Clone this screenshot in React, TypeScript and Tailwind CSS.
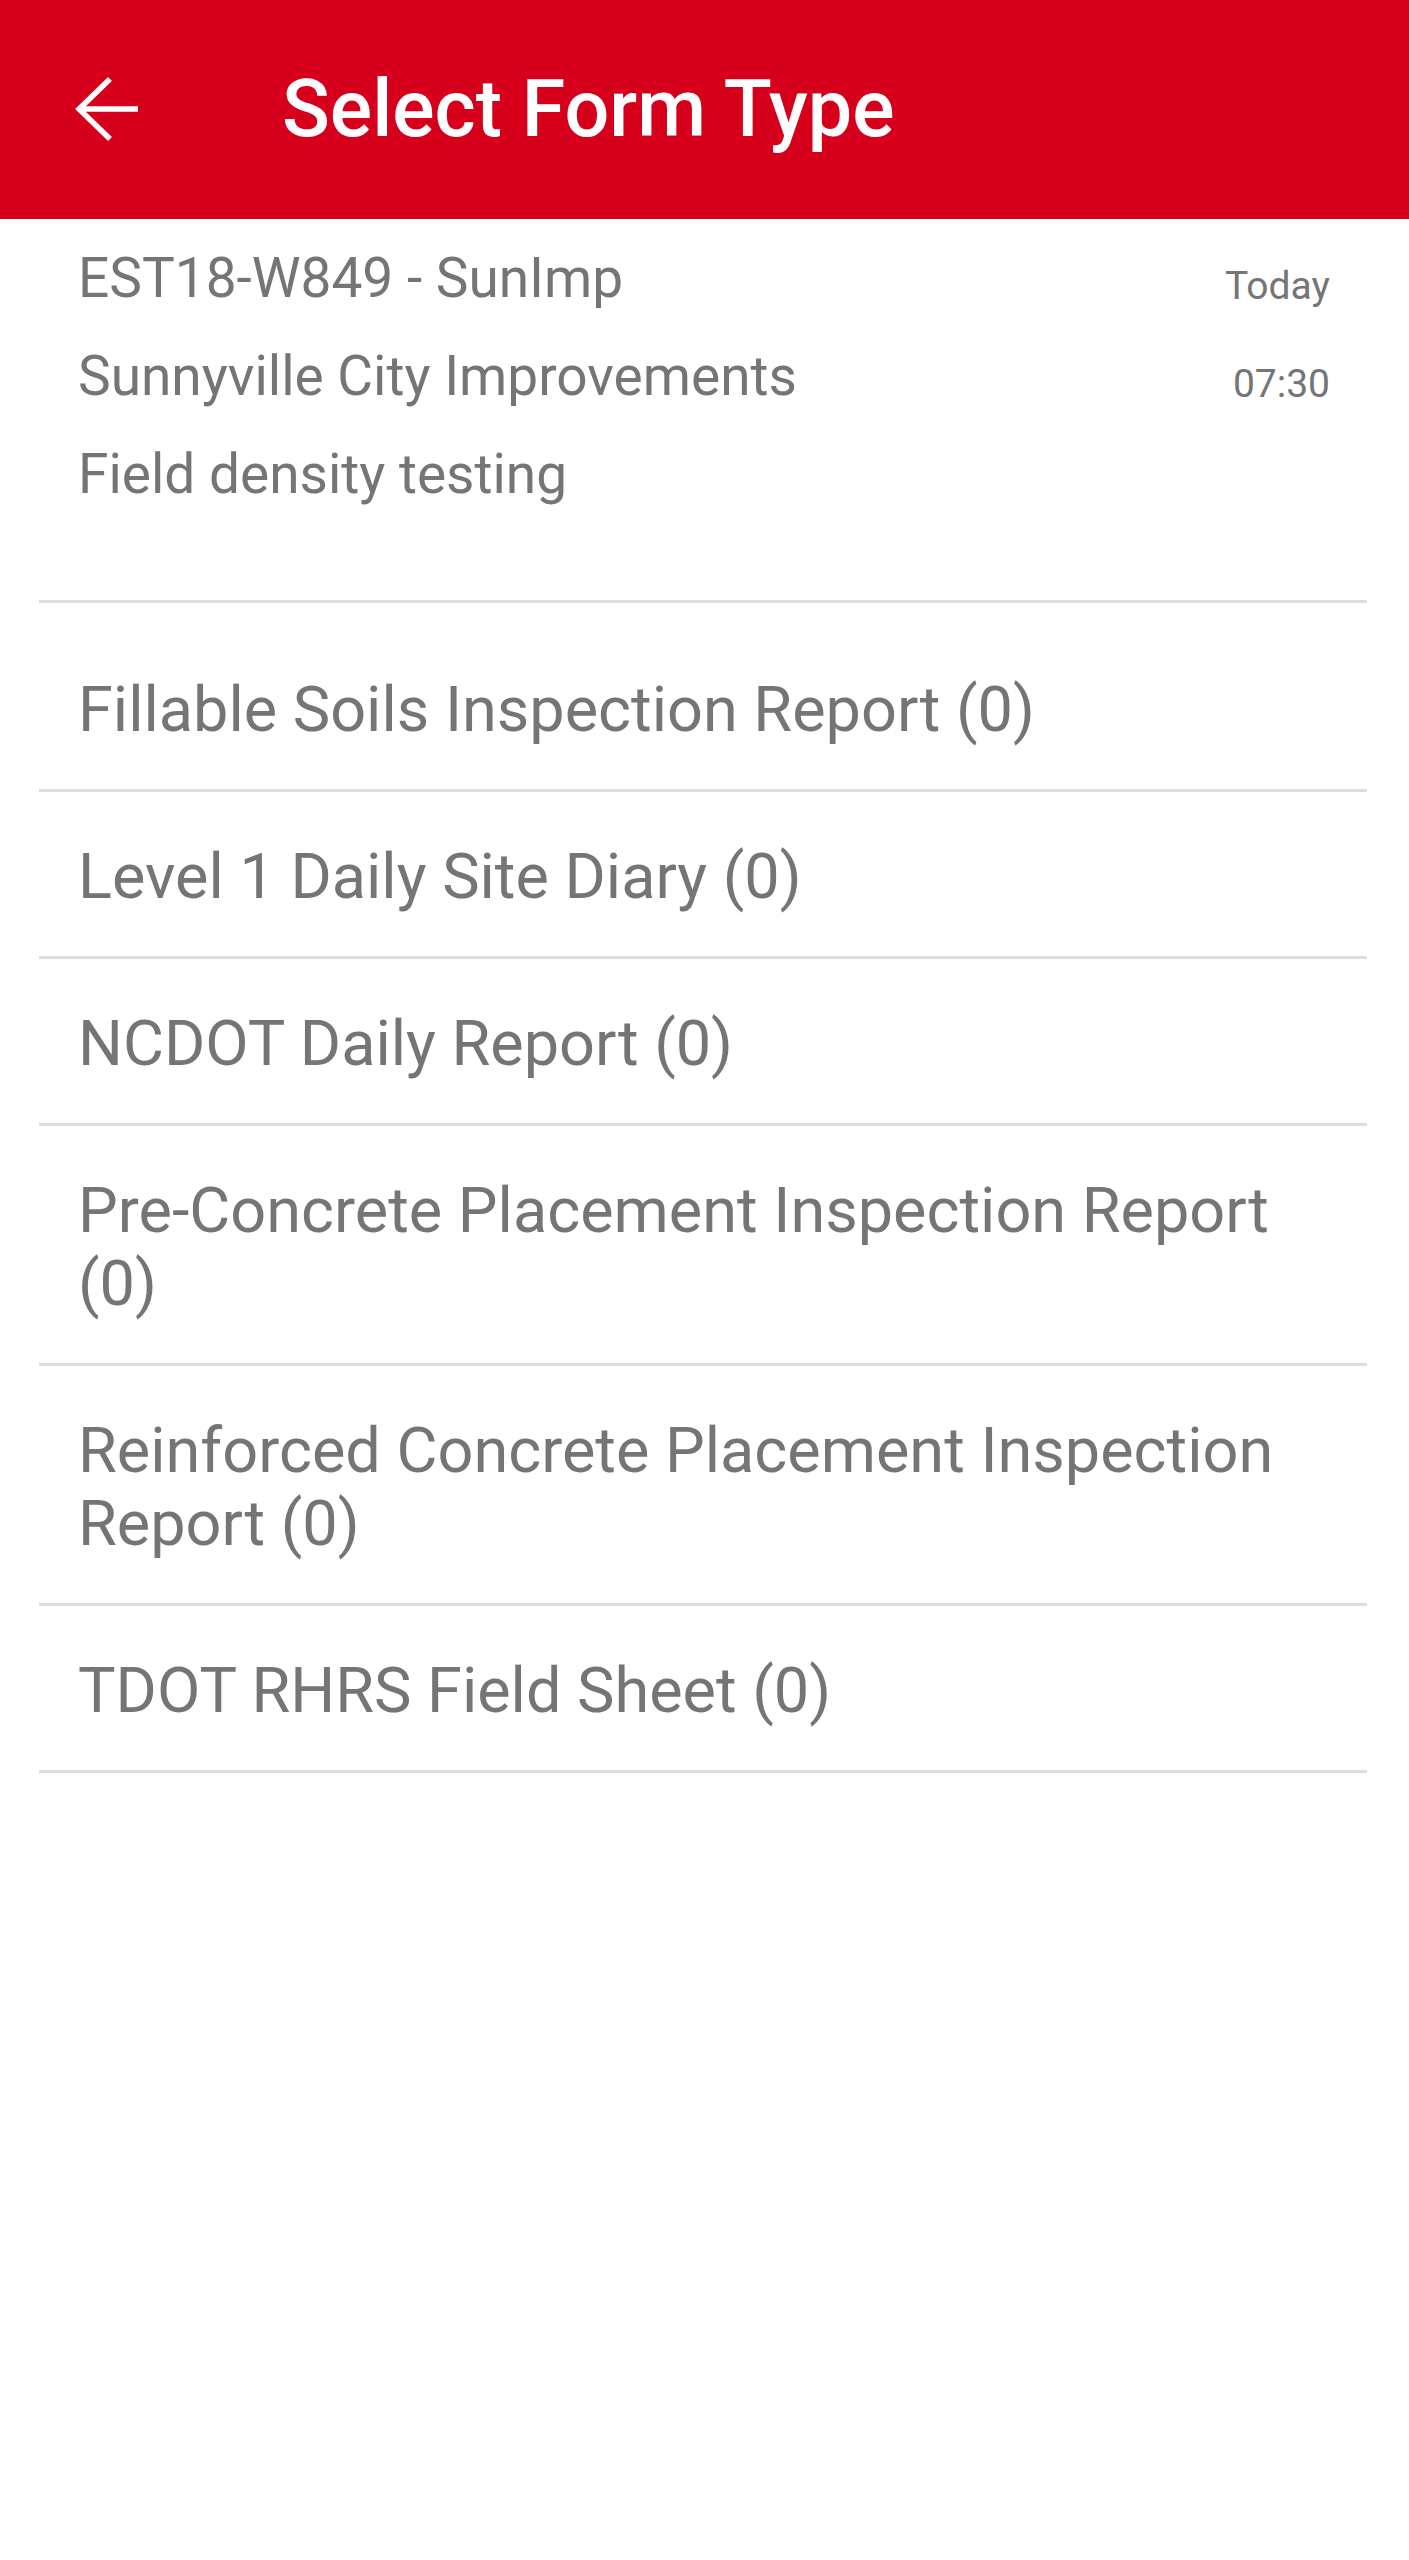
const FORM_TYPES = [
  "Fillable Soils Inspection Report (0)",
  "Level 1 Daily Site Diary (0)",
  "NCDOT Daily Report (0)",
  "Pre-Concrete Placement Inspection Report (0)",
  "Reinforced Concrete Placement Inspection Report (0)",
  "TDOT RHRS Field Sheet (0)",
];

function BackArrow() {
  return (
    <svg width="64" height="64" viewBox="0 0 64 64" fill="none" aria-hidden>
      <path
        d="M4 32H63M35 2L4 32L35 62"
        stroke="white"
        strokeWidth="5.5"
        strokeLinejoin="miter"
      />
    </svg>
  );
}

export default function App() {
  return (
    <div className="min-h-[2560px] w-full bg-white font-['Roboto','Liberation_Sans',sans-serif] text-[#757575]">
      <header className="flex h-[219px] items-center bg-[#d6001c]">
        <button type="button" className="ml-[75px] mt-[-2px] shrink-0" aria-label="Back">
          <BackArrow />
        </button>
        <h1 className="ml-[143px] text-[79px] font-medium leading-[1.17] text-white">Select Form Type</h1>
      </header>

      <section className="flex justify-between pl-[78px] pr-[79px] pt-[10px] pb-[77px]">
        <div className="text-[55px] leading-[98px]">
          <p>EST18-W849 - SunImp</p>
          <p>Sunnyville City Improvements</p>
          <p>Field density testing</p>
        </div>
        <div className="pt-2 text-right text-[39px] leading-[98px]">
          <p>Today</p>
          <p>07:30</p>
        </div>
      </section>

      <div className="ml-[39px] mr-[42px] h-[3px] bg-[#dedede]" />

      <ul className="pt-[22px]">
        {FORM_TYPES.map((name) => (
          <li
            key={name}
            className="ml-[39px] mr-[42px] border-b-[3px] border-[#dedede] pl-[39px] pr-[37px] pt-[48px] pb-[43px] text-[63px] leading-[73px]"
          >
            {name}
          </li>
        ))}
      </ul>
    </div>
  );
}
